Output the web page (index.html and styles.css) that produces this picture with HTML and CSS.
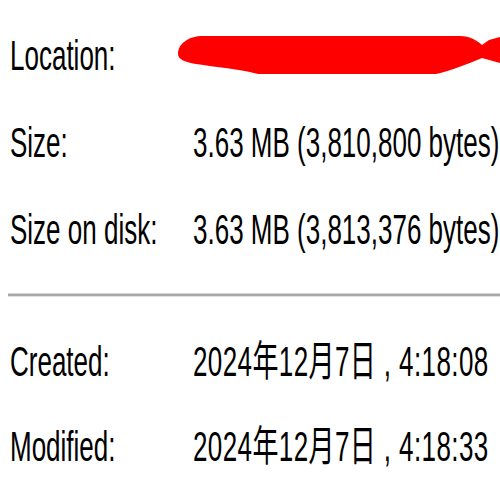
FILE: index.html
```html
<!DOCTYPE html>
<html>
<head>
  <meta charset="UTF-8">
  <title>File Properties</title>
  <link rel="stylesheet" href="styles.css">
</head>
<body>
  <div class="props">
    <div class="group">
      <div class="row">
        <span class="label"><span class="txt">Location:</span></span>
        <span class="value">
          <!-- redacted path -->
          <svg class="redact" width="322" height="45" viewBox="178 38 322 45">
            <path d="M178,58 C178,48 188,41 200,40 L460,40 C470,40 478,45 482,49 L489,44 L500,41 L500,67 L482,62 C470,67 450,75 436,78 L258,78 C240,73 215,71 196,68 C184,66 178,63 178,58 Z" fill="#ff0000"/>
          </svg>
        </span>
      </div>
      <div class="row">
        <span class="label"><span class="txt">Size:</span></span>
        <span class="value"><span class="txt">3.63 MB (3,810,800 bytes)</span></span>
      </div>
      <div class="row">
        <span class="label"><span class="txt">Size on disk:</span></span>
        <span class="value"><span class="txt">3.63 MB (3,813,376 bytes)</span></span>
      </div>
    </div>

    <div class="separator"></div>

    <div class="group dates">
      <div class="row">
        <span class="label"><span class="txt">Created:</span></span>
        <span class="value"><span class="txt">2024年12月7日 , 4:18:08</span></span>
      </div>
      <div class="row">
        <span class="label"><span class="txt">Modified:</span></span>
        <span class="value"><span class="txt">2024年12月7日 , 4:18:33</span></span>
      </div>
    </div>
  </div>
</body>
</html>
```

FILE: styles.css
```css
html,
body {
  margin: 0;
  padding: 0;
  width: 500px;
  height: 500px;
  overflow: hidden;
  background: #fff;
}
body {
  font-family: "Liberation Sans", "Noto Sans CJK SC", sans-serif;
  font-size: 26px;
  color: #000;
}
.props {
  padding: 11px 0 0 10px;
}
.row {
  display: grid;
  grid-template-columns: 183px 1fr;
  align-items: center;
  height: 87px;
  white-space: nowrap;
}
.dates .row {
  height: 85px;
}
.dates .value .txt {
  letter-spacing: 0.4px;
}
.label,
.value {
  display: flex;
  align-items: center;
  line-height: 26px;
}
.txt {
  display: inline-block;
  transform: scaleY(1.62);
}
.redact {
  display: block;
  margin-left: -15px;
  margin-top: 4px;
}
.separator {
  margin: 21px 0 21px -2px;
  height: 2px;
  background: #a9a9a9;
  border-top: 1px solid #d4d4d4;
  border-bottom: 1px solid #e2e2e2;
}
```
